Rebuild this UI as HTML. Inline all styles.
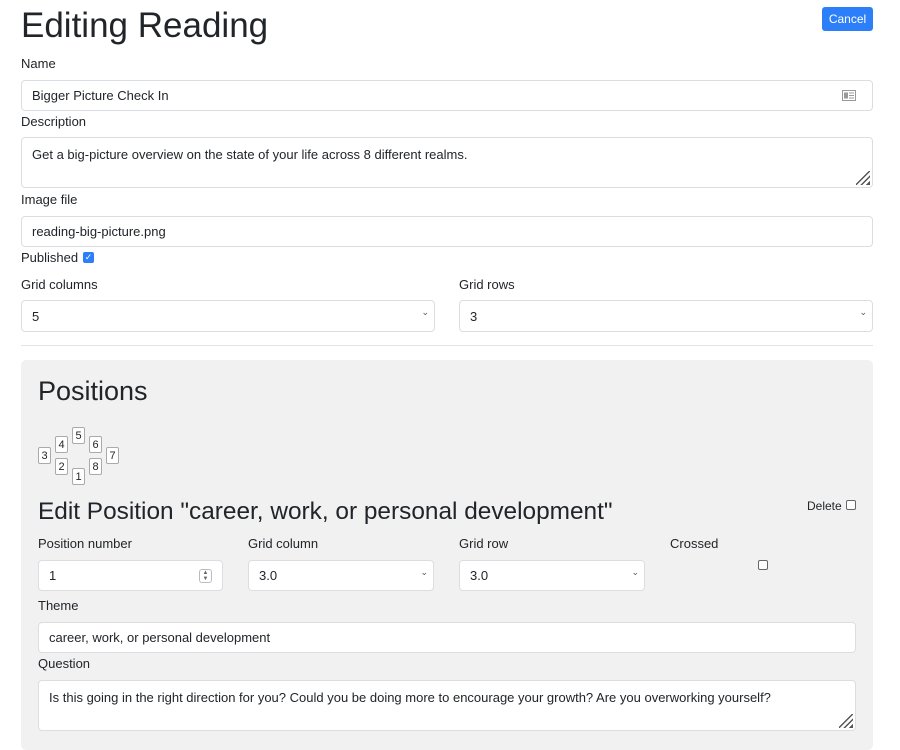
<!DOCTYPE html>
<html><head><style>
*{box-sizing:border-box}
body{margin:0;width:900px;height:737px;overflow:hidden;background:#fff;font-family:"Liberation Sans",sans-serif;color:#212529;font-size:13px;position:relative}
.a{position:absolute}
.lbl{font-size:13px;top:0}
.in{position:absolute;border:1px solid #dadee2;border-radius:4px;background:#fff;padding:0 10px;display:flex;align-items:center;font-size:13px}
.sel::after{content:"\2304";position:absolute;right:5px;top:6px;font-size:9px;color:#555}
.card{position:absolute;width:13px;height:17px;border:1px solid #aaa;background:#fff;border-radius:2px;font-size:11px;text-align:center;line-height:17px;font-family:"Liberation Sans Narrow","Liberation Sans",sans-serif}
.cb{position:absolute;width:10px;height:10px;border:1px solid #666;border-radius:2px;background:#fff}
.grip{position:absolute;right:2px;bottom:2px;width:14px;height:14px;background:linear-gradient(135deg,transparent 45%,#555 45%,#555 52%,transparent 52%,transparent 65%,#555 65%,#555 72%,transparent 72%,transparent 85%,#555 85%)}
</style></head><body>
<div class="a" style="left:21px;top:6px;font-size:35px;font-weight:300">Editing Reading</div>
<div class="a" style="left:822px;top:7px;width:51px;height:24px;background:#2d7ff9;border-radius:3px;color:#fff;font-size:12px;text-align:center;line-height:24px">Cancel</div>
<div class="a lbl" style="left:21px;top:56px">Name</div>
<div class="in" style="left:21px;top:80px;width:852px;height:31px">Bigger Picture Check In
<svg class="a" style="right:16px;top:9px" width="14" height="11"><rect x="0.5" y="0.5" width="13" height="10" fill="none" stroke="#999"/><rect x="2" y="2.5" width="4" height="6" fill="#999"/><line x1="7" y1="3" x2="12" y2="3" stroke="#999"/><line x1="7" y1="5.5" x2="12" y2="5.5" stroke="#999"/><line x1="7" y1="8" x2="12" y2="8" stroke="#999"/></svg></div>
<div class="a lbl" style="left:21px;top:114px">Description</div>
<div class="in" style="left:21px;top:137px;width:852px;height:51px;align-items:flex-start;padding-top:9px">Get a big-picture overview on the state of your life across 8 different realms.<div class="grip"></div></div>
<div class="a lbl" style="left:21px;top:192px">Image file</div>
<div class="in" style="left:21px;top:216px;width:852px;height:31px">reading-big-picture.png</div>
<div class="a lbl" style="left:21px;top:250px">Published</div>
<div class="a" style="left:83px;top:252px;width:11px;height:11px;background:#2d7ff9;border-radius:2px;color:#fff;font-size:9px;line-height:11px;text-align:center">✓</div>
<div class="a lbl" style="left:21px;top:277px">Grid columns</div>
<div class="a lbl" style="left:459px;top:277px">Grid rows</div>
<div class="in sel" style="left:21px;top:300px;width:414px;height:32px">5</div>
<div class="in sel" style="left:459px;top:300px;width:414px;height:32px">3</div>
<div class="a" style="left:21px;top:345px;width:852px;height:1px;background:#e3e3e3"></div>
<div class="a" style="left:21px;top:360px;width:852px;height:390px;background:#f1f1f1;border-radius:5px"></div>
<div class="a" style="left:38px;top:376px;font-size:27px">Positions</div>
<div class="card" style="left:38px;top:447px">3</div>
<div class="card" style="left:55px;top:436px">4</div>
<div class="card" style="left:72px;top:427px">5</div>
<div class="card" style="left:89px;top:436px">6</div>
<div class="card" style="left:106px;top:447px">7</div>
<div class="card" style="left:55px;top:458px">2</div>
<div class="card" style="left:72px;top:468px">1</div>
<div class="card" style="left:89px;top:458px">8</div>
<div class="a" style="left:38px;top:498px;font-size:24.4px">Edit Position "career, work, or personal development"</div>
<div class="a" style="left:807px;top:499px;font-size:12px">Delete</div>
<div class="cb" style="left:846px;top:500px"></div>
<div class="a lbl" style="left:38px;top:536px">Position number</div>
<div class="a lbl" style="left:248px;top:536px">Grid column</div>
<div class="a lbl" style="left:459px;top:536px">Grid row</div>
<div class="a lbl" style="left:670px;top:536px">Crossed</div>
<div class="in" style="left:38px;top:560px;width:185px;height:31px">1<div class="a" style="right:10px;top:8px;width:13px;height:14px;border:1px solid #bbb;border-radius:3px;font-size:6px;line-height:6px;text-align:center;color:#666">▲<br>▼</div></div>
<div class="in sel" style="left:248px;top:560px;width:186px;height:31px">3.0</div>
<div class="in sel" style="left:459px;top:560px;width:186px;height:31px">3.0</div>
<div class="cb" style="left:758px;top:560px"></div>
<div class="a lbl" style="left:38px;top:598px">Theme</div>
<div class="in" style="left:38px;top:622px;width:818px;height:31px">career, work, or personal development</div>
<div class="a lbl" style="left:38px;top:656px">Question</div>
<div class="in" style="left:38px;top:680px;width:818px;height:51px;align-items:flex-start;padding-top:9px">Is this going in the right direction for you? Could you be doing more to encourage your growth? Are you overworking yourself?<div class="grip"></div></div>
</body></html>
